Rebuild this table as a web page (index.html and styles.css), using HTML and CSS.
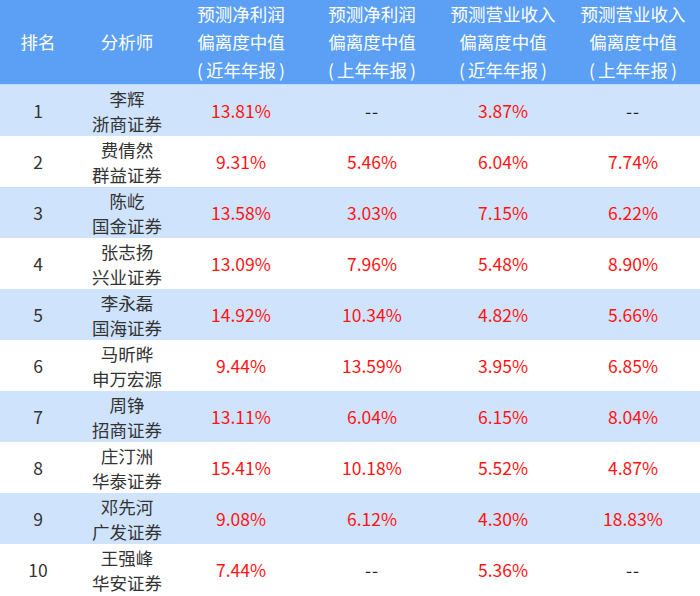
FILE: index.html
```html
<!DOCTYPE html>
<html lang="zh">
<head>
<meta charset="utf-8">
<link rel="stylesheet" href="styles.css">
</head>
<body>
<div class="table">
  <div class="row head">
    <div class="cell">排名</div>
    <div class="cell">分析师</div>
    <div class="cell">预测净利润<br>偏离度中值<br><span class="p">(</span>近年年报<span class="p">)</span></div>
    <div class="cell">预测净利润<br>偏离度中值<br><span class="p">(</span>上年年报<span class="p">)</span></div>
    <div class="cell">预测营业收入<br>偏离度中值<br><span class="p">(</span>近年年报<span class="p">)</span></div>
    <div class="cell">预测营业收入<br>偏离度中值<br><span class="p">(</span>上年年报<span class="p">)</span></div>
  </div>
  <div class="row odd">
    <div class="cell">1</div><div class="cell">李辉<br>浙商证券</div>
    <div class="cell red">13.81%</div><div class="cell dash">--</div>
    <div class="cell red">3.87%</div><div class="cell dash">--</div>
  </div>
  <div class="row">
    <div class="cell">2</div><div class="cell">费倩然<br>群益证券</div>
    <div class="cell red">9.31%</div><div class="cell red">5.46%</div>
    <div class="cell red">6.04%</div><div class="cell red">7.74%</div>
  </div>
  <div class="row odd">
    <div class="cell">3</div><div class="cell">陈屹<br>国金证券</div>
    <div class="cell red">13.58%</div><div class="cell red">3.03%</div>
    <div class="cell red">7.15%</div><div class="cell red">6.22%</div>
  </div>
  <div class="row">
    <div class="cell">4</div><div class="cell">张志扬<br>兴业证券</div>
    <div class="cell red">13.09%</div><div class="cell red">7.96%</div>
    <div class="cell red">5.48%</div><div class="cell red">8.90%</div>
  </div>
  <div class="row odd">
    <div class="cell">5</div><div class="cell">李永磊<br>国海证券</div>
    <div class="cell red">14.92%</div><div class="cell red">10.34%</div>
    <div class="cell red">4.82%</div><div class="cell red">5.66%</div>
  </div>
  <div class="row">
    <div class="cell">6</div><div class="cell">马昕晔<br>申万宏源</div>
    <div class="cell red">9.44%</div><div class="cell red">13.59%</div>
    <div class="cell red">3.95%</div><div class="cell red">6.85%</div>
  </div>
  <div class="row odd">
    <div class="cell">7</div><div class="cell">周铮<br>招商证券</div>
    <div class="cell red">13.11%</div><div class="cell red">6.04%</div>
    <div class="cell red">6.15%</div><div class="cell red">8.04%</div>
  </div>
  <div class="row">
    <div class="cell">8</div><div class="cell">庄汀洲<br>华泰证券</div>
    <div class="cell red">15.41%</div><div class="cell red">10.18%</div>
    <div class="cell red">5.52%</div><div class="cell red">4.87%</div>
  </div>
  <div class="row odd">
    <div class="cell">9</div><div class="cell">邓先河<br>广发证券</div>
    <div class="cell red">9.08%</div><div class="cell red">6.12%</div>
    <div class="cell red">4.30%</div><div class="cell red">18.83%</div>
  </div>
  <div class="row">
    <div class="cell">10</div><div class="cell">王强峰<br>华安证券</div>
    <div class="cell red">7.44%</div><div class="cell dash">--</div>
    <div class="cell red">5.36%</div><div class="cell dash">--</div>
  </div>
</div>
</body>
</html>
```
FILE: styles.css
```css
html, body {
  margin: 0;
  padding: 0;
  background: #ffffff;
}
body {
  font-family: "Noto Sans CJK SC", "Noto Sans", sans-serif;
  font-size: 17.5px;
  color: #333333;
}
.table {
  width: 700px;
}
.row {
  display: grid;
  grid-template-columns: 76px 102px 126px 136px 126px 134px;
  height: 51px;
  background: #ffffff;
}
.row.odd {
  background: #cfe3fd;
}
.row.head {
  height: 84px;
  background: #5ca0f6;
  color: #ffffff;
  border-bottom: 1px solid #bcd8fb;
}
.cell {
  display: flex;
  flex-direction: column;
  align-items: center;
  justify-content: center;
  text-align: center;
  line-height: 25px;
  white-space: nowrap;
}
.head .cell {
  display: block;
  align-self: center;
  line-height: 28px;
}
.p {
  display: inline-block;
  margin: 0 3px;
}
.red {
  color: #ff1414;
}
.dash {
  color: #222222;
  letter-spacing: 1px;
}
```
